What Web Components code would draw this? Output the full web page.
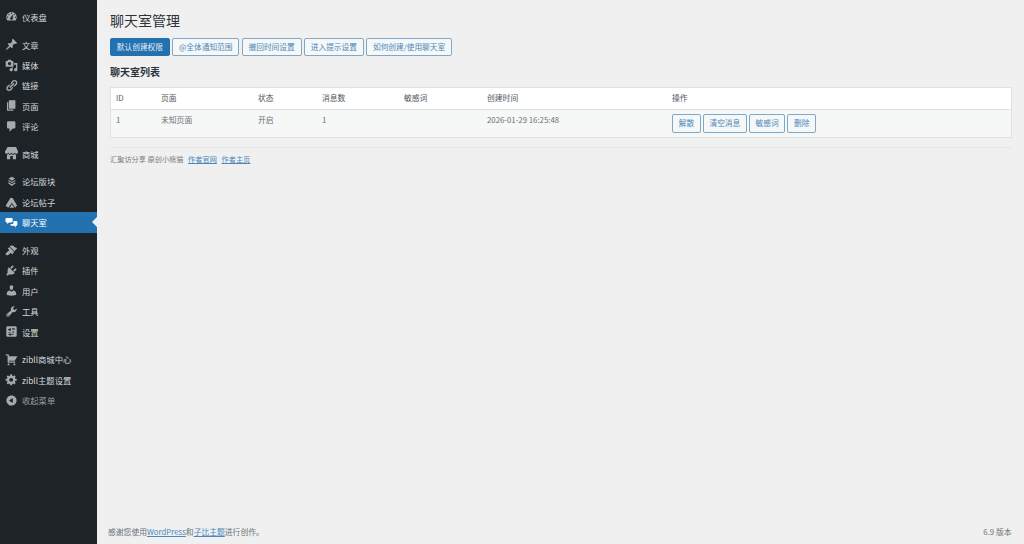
<!DOCTYPE html>
<html lang="zh-CN">
<head>
<meta charset="utf-8">
<title>聊天室管理</title>
<style>
html,body{margin:0;padding:0;height:100%;background:#f0f0f1;overflow:hidden}
body{font-family:"Noto Sans CJK SC","Noto Sans",sans-serif;color:#3c434a}
</style>
</head>
<body>
<wp-admin>
  <wp-sidebar slot="side">
    <wp-menu-group>
      <wp-menu-item icon="dashboard">仪表盘</wp-menu-item>
    </wp-menu-group>
    <wp-menu-group>
      <wp-menu-item icon="post">文章</wp-menu-item>
      <wp-menu-item icon="media">媒体</wp-menu-item>
      <wp-menu-item icon="links">链接</wp-menu-item>
      <wp-menu-item icon="page">页面</wp-menu-item>
      <wp-menu-item icon="comments">评论</wp-menu-item>
    </wp-menu-group>
    <wp-menu-group>
      <wp-menu-item icon="store">商城</wp-menu-item>
    </wp-menu-group>
    <wp-menu-group>
      <wp-menu-item icon="layers">论坛版块</wp-menu-item>
      <wp-menu-item icon="hammer">论坛帖子</wp-menu-item>
      <wp-menu-item icon="chat" active>聊天室</wp-menu-item>
    </wp-menu-group>
    <wp-menu-group>
      <wp-menu-item icon="appearance">外观</wp-menu-item>
      <wp-menu-item icon="plugins">插件</wp-menu-item>
      <wp-menu-item icon="users">用户</wp-menu-item>
      <wp-menu-item icon="tools">工具</wp-menu-item>
      <wp-menu-item icon="settings">设置</wp-menu-item>
    </wp-menu-group>
    <wp-menu-group>
      <wp-menu-item icon="cart">zibll商城中心</wp-menu-item>
      <wp-menu-item icon="cog">zibll主题设置</wp-menu-item>
      <wp-menu-item icon="collapse" muted>收起菜单</wp-menu-item>
    </wp-menu-group>
  </wp-sidebar>

  <wp-page>
    <h-title>聊天室管理</h-title>
    <wp-tabs>
      <wp-button primary>默认创建权限</wp-button>
      <wp-button>@全体通知范围</wp-button>
      <wp-button>撤回时间设置</wp-button>
      <wp-button>进入提示设置</wp-button>
      <wp-button>如何创建/使用聊天室</wp-button>
    </wp-tabs>
    <h-section>聊天室列表</h-section>
    <chat-table></chat-table>
    <wp-credit></wp-credit>
    <wp-footer></wp-footer>
  </wp-page>
</wp-admin>

<script>
const ICONS = {
  dashboard:'<path fill-rule="evenodd" d="M3.76 16h12.48c1.1-1.37 1.76-3.11 1.76-5 0-4.42-3.58-8-8-8s-8 3.58-8 8c0 1.89.66 3.63 1.76 5zM10 4c.55 0 1 .45 1 1s-.45 1-1 1-1-.45-1-1 .45-1 1-1zM6 6c.55 0 1 .45 1 1s-.45 1-1 1-1-.45-1-1 .45-1 1-1zm8 0c.55 0 1 .45 1 1s-.45 1-1 1-1-.45-1-1 .45-1 1-1zm-5.37 5.55L12 7v6c0 1.1-.9 2-2 2s-2-.9-2-2c0-.57.24-1.08.63-1.45zM4 10c.55 0 1 .45 1 1s-.45 1-1 1-1-.45-1-1 .45-1 1-1zm12 0c.55 0 1 .45 1 1s-.45 1-1 1-1-.45-1-1 .45-1 1-1z"/>',
  post:'<path d="M10.44 3.02l1.82-1.82 6.36 6.35-1.83 1.82c-1.05-.68-2.48-.57-3.41.36l-.75.75c-.92.93-1.04 2.35-.35 3.41l-1.83 1.82-2.41-2.41-2.8 2.79c-.42.42-3.38 2.71-3.8 2.29s1.86-3.39 2.28-3.81l2.79-2.79L4.1 9.36l1.83-1.82c1.05.69 2.48.57 3.4-.36l.75-.75c.93-.92 1.05-2.35.36-3.41z"/>',
  media:'<path fill-rule="evenodd" d="M13 11V4c0-.55-.45-1-1-1h-1.67L9 1H5L3.67 3H2c-.55 0-1 .45-1 1v7c0 .55.45 1 1 1h10c.55 0 1-.45 1-1zM7 4.5c1.38 0 2.5 1.12 2.5 2.5S8.38 9.5 7 9.5 4.5 8.38 4.5 7 5.62 4.5 7 4.5zM14 6h5v10.5c0 1.38-1.12 2.5-2.5 2.5S14 17.88 14 16.5s1.12-2.5 2.5-2.5c.17 0 .34.02.5.05V9h-3V6zm-4 8.05V13h2v3.5c0 1.38-1.12 2.5-2.5 2.5S7 17.88 7 16.5 8.12 14 9.5 14c.17 0 .34.02.5.05z"/>',
  links:'<path d="M17.74 2.76c1.68 1.69 1.68 4.41 0 6.1l-1.53 1.52c-1.12 1.12-2.7 1.47-4.14 1.09l2.62-2.61.76-.77.76-.76c.84-.84.84-2.2 0-3.04-.84-.85-2.2-.85-3.04 0l-.77.76-3.38 3.38c-.37-1.44-.02-3.02 1.1-4.14l1.52-1.53c1.69-1.68 4.42-1.68 6.1 0zM8.59 13.43l5.34-5.34c.42-.42.42-1.1 0-1.52-.44-.43-1.13-.39-1.53 0l-5.33 5.34c-.42.42-.42 1.1 0 1.52.44.43 1.13.39 1.52 0zm-.76 2.29l4.14-4.15c.38 1.44.03 3.02-1.09 4.14l-1.52 1.53c-1.69 1.68-4.41 1.68-6.1 0-1.68-1.68-1.68-4.42 0-6.1l1.53-1.52c1.12-1.12 2.7-1.47 4.14-1.1l-4.14 4.15c-.85.84-.85 2.2 0 3.05.84.84 2.2.84 3.04 0z"/>',
  page:'<path d="M6 15V2h10v13H6zm-1 1h8v2H3V5h2v11z"/>',
  comments:'<path d="M5 2h9c1.1 0 2 .9 2 2v7c0 1.1-.9 2-2 2h-2l-5 5v-5H5c-1.1 0-2-.9-2-2V4c0-1.1.9-2 2-2z"/>',
  store:'<path d="M1 10c.41.29.96.43 1.5.43.55 0 1.09-.14 1.5-.43.62-.46 1-1.17 1-2 0 .83.37 1.54 1 2 .41.29.96.43 1.5.43.55 0 1.09-.14 1.5-.43.62-.46 1-1.17 1-2 0 .83.37 1.54 1 2 .41.29.96.43 1.51.43.54 0 1.08-.14 1.49-.43.62-.46 1-1.17 1-2 0 .83.37 1.54 1 2 .41.29.96.43 1.5.43.55 0 1.09-.14 1.5-.43.63-.46 1-1.17 1-2V7l-3-7H4L0 7v1c0 .83.37 1.54 1 2zm2 8.99h5v-5h4v5h5v-7c-.37-.05-.72-.22-1-.43-.63-.45-1-.73-1-1.56 0 .83-.38 1.11-1 1.56-.41.3-.95.43-1.49.44-.55 0-1.1-.14-1.51-.44-.63-.45-1-.73-1-1.56 0 .83-.38 1.11-1 1.56-.41.3-.95.43-1.5.44-.54 0-1.09-.14-1.5-.44-.63-.45-1-.73-1-1.57 0 .84-.38 1.12-1 1.57-.29.21-.63.38-1 .44v6.99z"/>',
  layers:'<path d="M10.500 2.500l5 3-5 3.200-5-3.200z"/><path d="M5.500 7.600l5 3.100 5-3.100.8 1.400-5.800 3.700L4.700 9z"/><path d="M5.500 11.200l5 3.100 5-3.100.8 1.400-5.800 4.200-5.800-4.200z"/>',
  hammer:'<path d="M8.500 2.500l3.500 1 6.500 11-2.800 3.500-5.200-7.300L5 18l-4-3z"/><path d="M10.500 12.600l3.800 5.400H7z"/>',
  chat:'<path d="M2.500 3H10c1 0 1.800.8 1.800 1.800v3.400c0 1-.8 1.800-1.800 1.800H6l-2.500 2.500V10h-1C1.500 10 .7 9.200.7 8.200V4.800C.7 3.800 1.500 3 2.500 3z"/><path d="M13 7.500h4c1.100 0 2 .9 2 2V13c0 1.100-.9 2-2 2h-.5v2.500L14 15h-3.500c-1.100 0-2-.9-2-2v-.7H11c1.300 0 2-.8 2-2z"/>',
  appearance:'<path d="M14.480 11.060L7.410 3.990l1.500-1.500c.5-.56 2.300-.47 3.510.32 1.210.8 1.430 1.280 2.910 2.100 1.180.64 2.450 1.260 3.650 1.150zm-.71.71L6.700 4.700 4.930 6.470c-.39.39-.39 1.020 0 1.410l1.060 1.060c.39.39.39 1.030 0 1.420-.6.6-1.430 1.110-2.210 1.690-.35.26-.7.53-1.010.84C1.430 13.230.78 14.420 1.090 15.600c.31 1.180 1.550 1.840 2.770 1.690 1.670-.2 3.090-1.800 4.320-3.010.39-.39 1.030-.39 1.420 0l1.050 1.070c.39.39 1.020.39 1.410 0z"/>',
  plugins:'<path d="M13.110 4.360L9.870 7.600 8 5.730l3.240-3.240c.35-.34 1.050-.2 1.560.32.52.51.66 1.210.31 1.550zm-8 1.770l.91-1.120 9.010 9.010-1.190.84c-.71.71-2.630 1.160-3.820 1.160H6.140L4.900 17.260c-.59.59-1.540.59-2.120 0-.59-.58-.59-1.530 0-2.120l1.240-1.240v-3.880c0-1.130.4-3.190 1.090-3.890zm7.260 3.970l3.240-3.240c.34-.35 1.040-.21 1.550.31.52.51.66 1.210.31 1.550l-3.240 3.250z"/>',
  users:'<path d="M10 9.250c-2.270 0-2.730-3.440-2.730-3.440C7 4.020 7.820 2 9.970 2c2.160 0 2.980 2.020 2.710 3.810 0 0-.41 3.440-2.680 3.440zm0 2.570L12.720 10c2.390 0 4.520 2.330 4.520 4.530v2.490s-3.650 1.130-7.240 1.130c-3.650 0-7.240-1.130-7.240-1.130v-2.490c0-2.250 1.940-4.480 4.470-4.480z"/>',
  tools:'<path fill-rule="evenodd" d="M16.680 9.770c-1.340 1.340-3.300 1.670-4.950.99l-5.410 6.520c-.99.99-2.590.99-3.580 0s-.99-2.590 0-3.570l6.520-5.420c-.68-1.650-.35-3.610.99-4.950 1.280-1.280 3.120-1.620 4.720-1.060l-2.890 2.890 2.820 2.820 2.860-2.870c.53 1.580.18 3.390-1.080 4.650zM3.810 16.210c.4.39 1.040.39 1.430 0 .4-.4.4-1.040 0-1.430-.39-.4-1.030-.4-1.430 0-.39.39-.39 1.030 0 1.430z"/>',
  settings:'<path fill-rule="evenodd" d="M4 2h12c1.100 0 2 .9 2 2v12c0 1.100-.9 2-2 2H4c-1.100 0-2-.9-2-2V4c0-1.100.9-2 2-2zm1 4v2h2v1h2V5H7v1zm6 0v1h4V5h-4zm-6 5v1h4v-1zm6 0v1h1v1h1v-4h-1v2zm-4 2v1H5v1h2v1h2v-3zm2 1v1h4v-1z"/>',
  cart:'<path d="M6 13h9c.55 0 1 .45 1 1s-.45 1-1 1H5c-.55 0-1-.45-1-1V4H2c-.55 0-1-.45-1-1s.45-1 1-1h3c.55 0 1 .45 1 1v2h13l-4 7H6v1zm-.5 3c.83 0 1.500.67 1.500 1.500S6.330 19 5.500 19 4 18.330 4 17.500 4.670 16 5.500 16zm9 0c.83 0 1.500.67 1.500 1.500s-.67 1.500-1.500 1.500-1.500-.67-1.500-1.500.67-1.500 1.500-1.500z"/>',
  cog:'<path fill-rule="evenodd" d="M18 12h-2.180c-.17.7-.44 1.350-.81 1.930l1.540 1.540-2.100 2.100-1.540-1.540c-.58.36-1.230.63-1.910.79V19H8v-2.180c-.68-.16-1.330-.43-1.910-.79l-1.540 1.540-2.120-2.120 1.540-1.540c-.36-.58-.63-1.230-.79-1.910H1V9.030h2.170c.16-.7.44-1.350.8-1.940L2.430 5.550l2.100-2.100 1.540 1.540c.58-.37 1.240-.64 1.930-.81V2h3v2.180c.68.16 1.330.43 1.910.79l1.540-1.540 2.120 2.120-1.540 1.540c.36.59.64 1.240.8 1.940H18V12zm-8.500 1.500c1.660 0 3-1.340 3-3s-1.340-3-3-3-3 1.340-3 3 1.340 3 3 3z"/>',
  collapse:'<path fill-rule="evenodd" d="M10 2.160c4.330 0 7.840 3.510 7.840 7.840s-3.510 7.840-7.840 7.840S2.160 14.330 2.160 10 5.710 2.160 10 2.160zm2 11.720V6.120L6.180 9.970z"/>'
};

function define(name, css, html){
  customElements.define(name, class extends HTMLElement{
    constructor(){
      super();
      this.attachShadow({mode:'open'}).innerHTML = '<style>'+css+'</style>'+(typeof html==='function'?html(this):html);
    }
  });
}

const FONT = '"Noto Sans CJK SC","Noto Sans",sans-serif';

define('wp-admin',
  ':host{display:flex;width:100%;height:544px;background:#f0f0f1}',
  '<slot name="side"></slot><slot></slot>');

define('wp-sidebar',
  ':host{display:flex;flex-direction:column;flex:none;width:97px;height:544px;box-sizing:border-box;background:#1d2327;padding-top:6.8px}',
  '<slot></slot>');

define('wp-menu-group',
  ':host{display:block;margin-bottom:7.3px}',
  '<slot></slot>');

define('wp-menu-item',
  `:host{display:flex;align-items:center;height:20.4px;padding-left:4.5px;gap:4.5px;position:relative;
     font:8.3px/1 ${FONT};color:#d6d8da}
   :host([active]){background:#2271b1;color:#fff}
   :host([muted]){color:#9a9ea2}
   svg{width:13px;height:13px;flex:none;fill:#a7aaad}
   :host([active]) svg{fill:#fff}
   .arrow{display:none;position:absolute;right:0;top:50%;margin-top:-5px;width:0;height:0;
     border:5px solid transparent;border-left:0;border-right-color:#f0f0f1}
   :host([active]) .arrow{display:block}`,
  el=>`<svg viewBox="0 0 20 20" aria-hidden="true">${ICONS[el.getAttribute('icon')]||''}</svg><span><slot></slot></span><i class="arrow"></i>`);

define('wp-page',
  ':host{display:flex;flex-direction:column;flex:1;min-width:0;height:544px;box-sizing:border-box;padding:0 12.5px 0 13px}',
  '<slot></slot>');

define('h-title',
  `:host{display:block;font:400 14px/20px ${FONT};color:#2c3338;padding-top:10px}`,
  '<slot></slot>');

define('wp-tabs',
  ':host{display:flex;gap:2.4px;margin-top:8px}',
  '<slot></slot>');

define('wp-button',
  `:host{display:inline-flex;align-items:center;justify-content:center;box-sizing:border-box;height:18px;padding:0 5.85px;
     border:.75px solid #7ea9cb;border-radius:2px;background:#f6f7f7;color:#4a88ba;
     font:7.7px/1 ${FONT};white-space:nowrap}
   :host([primary]){background:#2271b1;border-color:#2271b1;color:#e6eff6}`,
  '<slot></slot>');

define('h-section',
  `:host{display:block;font:700 10px/14px ${FONT};color:#2c3338;margin-top:9px}`,
  '<slot></slot>');

define('chat-table',
  `:host{display:block;margin-top:8px;border:1px solid #e0e1e3;background:#fff;font:7.8px/1 ${FONT};color:#6a7075}
   table{width:100%;border-collapse:collapse;table-layout:fixed}
   th,td{text-align:left;font-weight:400;padding:0 0 0 5px;vertical-align:top;box-sizing:border-box}
   th{height:21px;vertical-align:middle;border-bottom:1px solid #e0e1e3;color:#50575e}
   td{height:28px;background:#f6f7f7;padding-top:6.5px}
   td.ops{padding-top:4px}
   .ops div{display:flex;gap:2px}
   wp-button{height:19px;padding:0 5.7px}`,
  `<table>
    <colgroup><col style="width:45px"><col style="width:97px"><col style="width:64px"><col style="width:82px"><col style="width:83px"><col style="width:185px"><col></colgroup>
    <thead><tr><th>ID</th><th>页面</th><th>状态</th><th>消息数</th><th>敏感词</th><th>创建时间</th><th>操作</th></tr></thead>
    <tbody><tr><td>1</td><td>未知页面</td><td>开启</td><td>1</td><td></td><td>2026-01-29 16:25:48</td>
      <td class="ops"><div><wp-button>解散</wp-button><wp-button>清空消息</wp-button><wp-button>敏感词</wp-button><wp-button>删除</wp-button></div></td></tr></tbody>
  </table>`);

define('wp-credit',
  `:host{display:block;margin-top:9px;border-top:1px solid #e6e6e7;padding-top:6px;font:7.2px/10px ${FONT};color:#777c81}
   a{color:#4a88ba;text-decoration:underline;margin-left:3px}`,
  '汇聚访分享 原创小熊猫 <a href="#">作者官网</a> <a href="#">作者主页</a>');

define('wp-footer',
  `:host{display:flex;justify-content:space-between;align-items:center;margin:auto 0 6px -2px;height:12px;font:7.8px/12px ${FONT};color:#6a7075}
   a{color:#4a88ba;text-decoration:underline}`,
  '<span>感谢您使用<a href="#">WordPress</a>和<a href="#">子比主题</a>进行创作。</span><span>6.9 版本</span>');
</script>
</body>
</html>
